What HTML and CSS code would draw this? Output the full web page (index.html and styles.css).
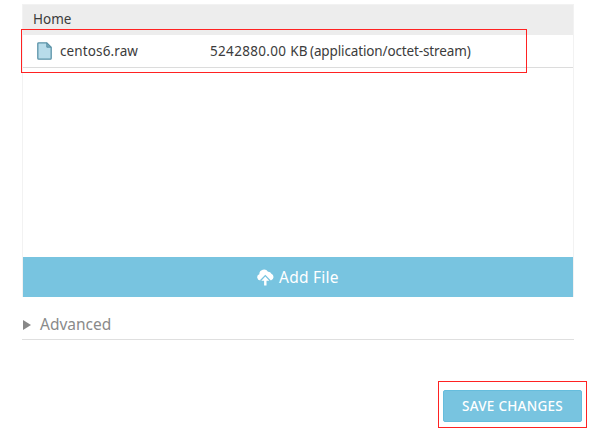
FILE: index.html
```html
<!DOCTYPE html>
<html lang="en">
<head>
<meta charset="utf-8">
<title>Files</title>
<link rel="stylesheet" href="styles.css">
</head>
<body>
<main class="page">
  <section class="panel">
    <header class="crumb">Home</header>
    <div class="row">
      <svg class="file-icon" width="15" height="18" viewBox="0 0 15 18">
        <path d="M1.7.8h8.1l4.4 4.4v11.1a.9.9 0 0 1-.9.9H1.7a.9.9 0 0 1-.9-.9V1.7a.9.9 0 0 1 .9-.9z" fill="#b8dcea" stroke="#5b93a8" stroke-width="1.3"/>
        <path d="M9.8 1v4.2H14z" fill="#79aabc" stroke="#5b93a8"/>
      </svg>
      <span class="name">centos6.raw</span>
      <span class="size">5242880.00 KB</span>
      <span class="type">(application/octet-stream)</span>
      <div class="mark mark-row"></div>
    </div>
    <div class="space"></div>
    <div class="add">
      <svg class="cloud" width="17" height="17" viewBox="0 0 17 17">
        <path d="M3.3 11.4A3.2 3.2 0 0 1 2.3 5.2A4.7 4.7 0 0 1 11 2.8A3.5 3.5 0 0 1 14.4 4.8A3.5 3.5 0 0 1 13.9 11.4L8.3 5.8L3.3 10.8z" fill="#fff"/>
        <path d="M8.3 7.5l4 4.2H9.5v4.8H7.1v-4.8H4.3z" fill="#fff"/>
      </svg>
      <span class="add-label">Add File</span>
    </div>
  </section>
  <div class="advanced">
    <svg class="arrow" width="8" height="10" viewBox="0 0 8 10"><path d="M0 0l8 5-8 5z" fill="#888"/></svg>
    <span class="advanced-label">Advanced</span>
  </div>
  <div class="actions">
    <div class="save">SAVE CHANGES<div class="mark mark-save"></div></div>
  </div>
</main>
</body>
</html>
```

FILE: styles.css
```css
* { box-sizing: border-box; }
body {
  margin: 0;
  background: #fff;
  color: #3c3c3c;
  font: 13.5px "Noto Sans", sans-serif;
}
.page { width: 597px; height: 434px; padding: 4px 23px 0 22px; overflow: hidden; }
.panel { width: 552px; border: 1px solid #f2f2f2; border-bottom: 0; }
.crumb {
  display: flex;
  align-items: center;
  height: 30px;
  padding: 0 0 2px 10px;
  background: #ededed;
}
.row {
  position: relative;
  display: flex;
  align-items: center;
  height: 33px;
  padding-left: 14px;
  border-bottom: 1px solid #dcdcdc;
  white-space: nowrap;
}
.file-icon { flex: none; margin-right: 8px; }
.name { width: 150px; letter-spacing: .12px; }
.size { width: 100px; letter-spacing: .32px; }
.type { letter-spacing: -.13px; }
.space { height: 189px; }
.add {
  display: flex;
  align-items: center;
  height: 40px;
  padding-left: 234px;
  background: #78c4e0;
  color: #fff;
  font-size: 15.5px;
}
.cloud { margin: 0 5px 0 0; }
.add-label { padding-bottom: 1px; letter-spacing: .25px; }
.advanced {
  display: flex;
  align-items: center;
  width: 552px;
  height: 43px;
  padding: 13px 0 0 1px;
  border-bottom: 1px solid #dfdfdf;
  color: #8a8a8a;
  font-size: 15.5px;
}
.arrow { margin-right: 9px; }
.advanced-label { padding-bottom: 1px; }
.actions { display: flex; padding: 50px 0 0 421px; }
.save {
  position: relative;
  display: flex;
  flex: none;
  align-items: center;
  width: 139px;
  height: 32px;
  padding: 0 0 1px 18px;
  border: 1px solid #65bddd;
  border-radius: 2px;
  background: #78c4e0;
  color: #fff;
  font-size: 13.5px;
  font-weight: 500;
  letter-spacing: .27px;
  white-space: nowrap;
}
.mark { position: absolute; border: 1px solid #f22; }
.mark-row { left: -2px; top: -6px; width: 506px; height: 44px; }
.mark-save { left: -6px; top: -10px; width: 149px; height: 47px; }
```
